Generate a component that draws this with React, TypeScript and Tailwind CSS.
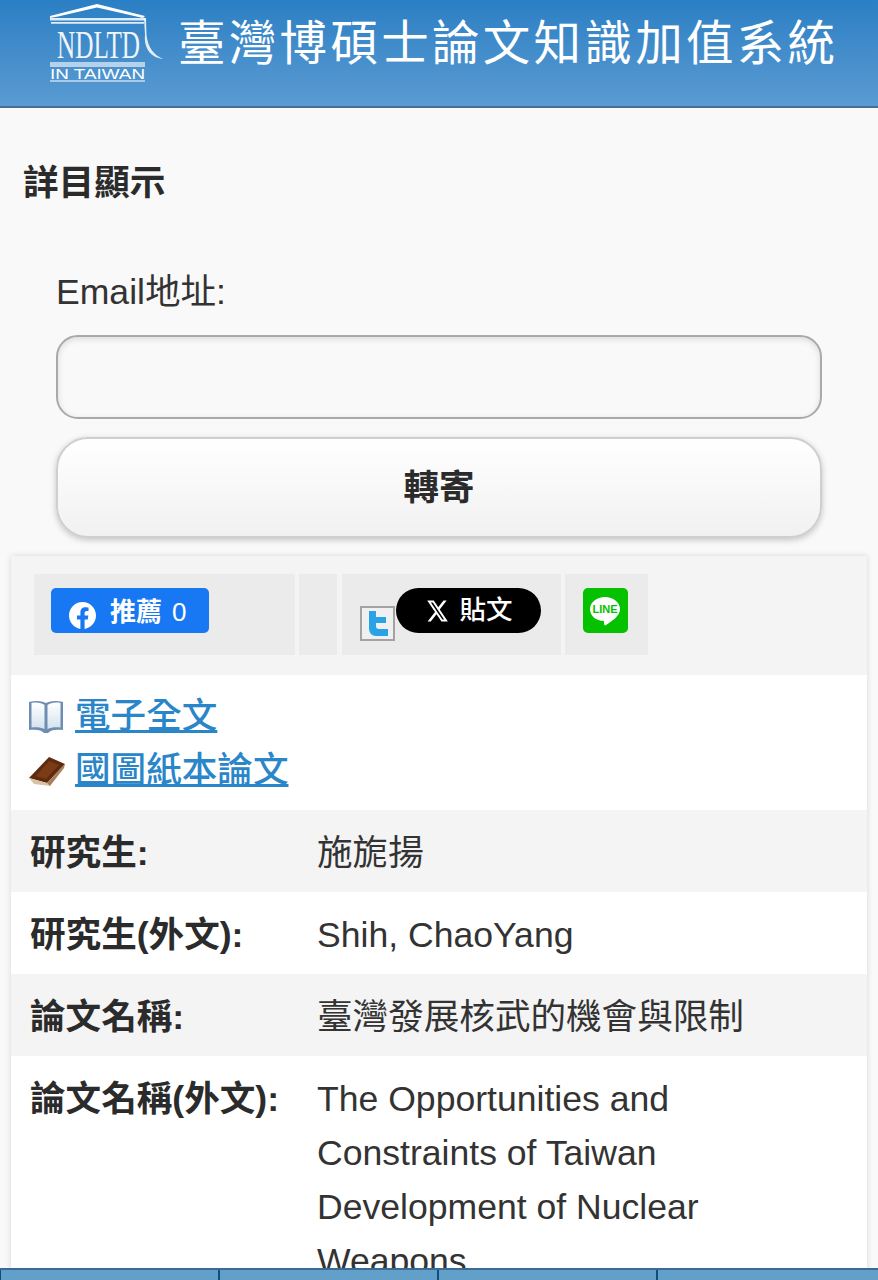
const cjk = "font-['Liberation_Sans','Noto_Sans_CJK_TC',sans-serif]";

function Logo() {
  return (
    <svg width="116" height="84" viewBox="0 0 116 84" className="shrink-0">
      <path d="M2 15 L49 3 L97 15 L95 17 L49 6.500 L10 15.500 L2 17 Z" fill="#fff" />
      <path d="M2 17 H97 V19.500 H2 Z M3 21 H96 V22.800 H3 Z" fill="#fff" opacity="0.85" />
      <text transform="translate(9 57) scale(1.230 2)" fill="#fff" fontFamily="Liberation Serif, serif" fontSize="20.500" opacity="0.92">
        NDLTD
      </text>
      <path d="M96 17 L97 34 C96 44 100 56 115 58 C106 54 100 47 98.500 34 L98 17 Z" fill="#fff" opacity="0.85" />
      <path d="M2 61 H97 V66 H2 Z" fill="#fff" opacity="0.6" />
      <text x="2" y="78" fill="#fff" fontFamily="Liberation Sans, sans-serif" fontSize="15.500" textLength="95" lengthAdjust="spacingAndGlyphs">
        IN TAIWAN
      </text>
      <path d="M2 80 H97" stroke="#fff" strokeWidth="1.200" />
    </svg>
  );
}

function OpenBook() {
  return (
    <svg width="36" height="36" viewBox="0 0 36 36" className="shrink-0">
      <defs>
        <linearGradient id="page" x1="0" y1="0" x2="0" y2="1">
          <stop offset="0" stopColor="#ffffff" />
          <stop offset="1" stopColor="#d3e2ee" />
        </linearGradient>
      </defs>
      <path d="M1 3 C8 1 14 2 18 4 C22 2 28 1 35 3 V31 C28 30 22 31 20 34 H16 C14 31 8 30 1 31 Z" fill="#6f8db0" />
      <path d="M3.500 4 C9 3 14 4 16.500 6 V30 C13 28.500 9 28 3.500 28.500 Z" fill="url(#page)" />
      <path d="M32.500 4 C27 3 22 4 19.500 6 V30 C23 28.500 27 28 32.500 28.500 Z" fill="url(#page)" />
    </svg>
  );
}

function ClosedBook() {
  return (
    <svg width="38" height="32" viewBox="0 0 38 32" className="shrink-0">
      <path d="M1 23 L21 2 L37 9 L19 28 Z" fill="#5e2b10" />
      <path d="M1 23 L19 28 L23 31 L6 29 Z" fill="#d8c2a4" />
      <path d="M19 28 L37 9 L36 13 L22 31 Z" fill="#a87f58" />
      <path d="M8 21 L21 6 L31 10 L18 24 Z" fill="#7a3c16" />
    </svg>
  );
}

function InfoRow({ label, value, shaded }: { label: string; value: string; shaded?: boolean }) {
  return (
    <div className={`flex items-start pt-[16px] pb-[12px] pl-[19px] ${shaded ? "bg-[#f4f4f4]" : "bg-white"}`}>
      <div className="w-[287px] shrink-0 text-[35.6px] leading-[54px] font-bold text-[#2b2b2b]">{label}</div>
      <div className="w-[470px] text-[35.6px] leading-[54px] text-[#333]">{value}</div>
    </div>
  );
}

export default function App() {
  return (
    <div className={`flex h-[1280px] w-[878px] flex-col overflow-hidden bg-[#f9f9f9] ${cjk}`}>
      <header className="flex h-[108px] shrink-0 items-start gap-[14px] border-b-2 border-[#456f9a] bg-gradient-to-b from-[#2a7fc4] to-[#5a9bd2] pl-[48px] pt-[1px]">
        <Logo />
        <h1 className="mt-[11px] text-[47.5px] leading-[64px] font-normal tracking-[3.3px] whitespace-nowrap text-white">
          臺灣博碩士論文知識加值系統
        </h1>
      </header>

      <main className="min-h-0 flex-1 overflow-hidden">
        <h2 className="pt-[53px] pl-[23px] text-[35.6px] leading-[44px] font-bold text-[#2b2b2b]">詳目顯示</h2>

        <form className="px-[56px] pt-[65px]">
          <label className="block text-[35.6px] leading-[44px] text-[#333]">Email地址:</label>
          <input
            type="text"
            className="mt-[21px] block h-[84px] w-[766px] rounded-[22px] border-2 border-[#a9a9a9] bg-[#f9f9f9] shadow-[inset_0_2px_6px_rgba(0,0,0,0.12)]"
          />
          <button
            type="button"
            className="mt-[18px] block h-[101px] w-[766px] rounded-[32px] border-2 border-[#cfcfcf] bg-gradient-to-b from-white to-[#f1f1f1] pt-[3px] text-[35.6px] font-bold text-[#2b2b2b] shadow-[0_2px_6px_rgba(0,0,0,0.22)]"
          >
            轉寄
          </button>
        </form>

        <section className="mx-[11px] mt-[18px] shadow-[0_0_6px_rgba(0,0,0,0.14)]">
          <div className="flex h-[119px] gap-[4.3px] bg-[#f4f4f4] pt-[18px] pl-[23px]">
            <div className="h-[81px] w-[261px] bg-[#ebebeb] pt-[14px] pl-[17px]">
              <div className="flex h-[45px] w-[158px] items-center rounded-[5px] bg-[#1877f2] pl-[18px] text-white">
                <svg width="27" height="27" viewBox="0 0 24 24" fill="#fff" className="mt-[9px] shrink-0">
                  <path d="M24 12.070C24 5.400 18.630 0 12 0S0 5.400 0 12.070c0 6.030 4.390 11.020 10.130 11.930v-8.440H7.080v-3.490h3.050V9.410c0-3.030 1.790-4.700 4.530-4.700 1.310 0 2.690.240 2.690.240v2.970h-1.520c-1.490 0-1.960.93-1.960 1.890v2.260h3.330l-.53 3.490h-2.800V24C19.610 23.090 24 18.100 24 12.070z" />
                </svg>
                <span className="mt-[3px] ml-[14px] text-[26px] font-bold whitespace-nowrap">推薦</span>
                <span className="mt-[3px] ml-[10px] text-[26px] font-normal">0</span>
              </div>
            </div>
            <div className="h-[81px] w-[38px] bg-[#ebebeb]" />
            <div className="relative h-[81px] w-[219px] bg-[#ebebeb]">
              <div className="absolute top-[32px] left-[18px] flex h-[35px] w-[35px] items-center justify-center border-2 border-[#a3a3a3] bg-[#f0f0f0]">
                <svg width="27" height="27" viewBox="0 0 27 27">
                  <path d="M5 1 H12 V7 H22 V13 H12 V16 C12 18 13 19 15 19 H24 V26 H12 C7 26 5 22 5 18 Z" fill="#2aa3e6" />
                </svg>
              </div>
              <div className="absolute top-[14px] left-[54px] flex h-[45px] w-[145px] items-center rounded-full bg-black pl-[30px] text-white">
                <svg width="23" height="26" viewBox="0 0 24 24" fill="#fff" preserveAspectRatio="none" className="shrink-0">
                  <path d="M18.240 2.250h3.310l-7.230 8.260 8.500 11.240H16.170l-5.210-6.820L4.990 21.750H1.680l7.730-8.840L1.250 2.250H8.080l4.710 6.230zm-1.160 17.520h1.830L7.080 4.130H5.120z" />
                </svg>
                <span className="ml-[11px] text-[26.500px] font-medium">貼文</span>
              </div>
            </div>
            <div className="h-[81px] w-[83px] bg-[#ebebeb] pt-[14px] pl-[18px]">
              <div className="flex h-[45px] w-[45px] items-center justify-center rounded-[5px] bg-[#06c100]">
                <svg width="34" height="34" viewBox="0 0 34 34">
                  <path d="M17 3 C25 3 32 8 32 15 C32 22 24 27 18 31 C17 32 16 31 16 29 V27 C8 27 2 22 2 15 C2 8 9 3 17 3 Z" fill="#fff" />
                  <text x="17" y="19" textAnchor="middle" fill="#06c100" fontFamily="Liberation Sans, sans-serif" fontWeight="700" fontSize="11">
                    LINE
                  </text>
                </svg>
              </div>
            </div>
          </div>

          <div className="flex flex-col gap-[14px] bg-white pt-[22px] pb-[19px] pl-[17px]">
            <a className="flex h-[40px] items-center gap-[11px]">
              <OpenBook />
              <span className="text-[35.6px] font-medium text-[#2a86c8] underline">電子全文</span>
            </a>
            <a className="flex h-[40px] items-center gap-[9px]">
              <ClosedBook />
              <span className="text-[35.6px] font-medium text-[#2a86c8] underline">國圖紙本論文</span>
            </a>
          </div>

          <InfoRow shaded label="研究生:" value="施旎揚" />
          <InfoRow label="研究生(外文):" value="Shih, ChaoYang" />
          <InfoRow shaded label="論文名稱:" value="臺灣發展核武的機會與限制" />
          <InfoRow label="論文名稱(外文):" value="The Opportunities and Constraints of Taiwan Development of Nuclear Weapons" />
        </section>
      </main>

      <footer className="flex h-[12px] shrink-0 gap-[2px] border-t-2 border-[#3a6b96] bg-[#0f4d7a] pl-[1px]">
        <div className="w-[217px] bg-[#629fc9]" />
        <div className="w-[217px] bg-[#629fc9]" />
        <div className="w-[217px] bg-[#629fc9]" />
        <div className="flex-1 bg-[#629fc9]" />
      </footer>
    </div>
  );
}
